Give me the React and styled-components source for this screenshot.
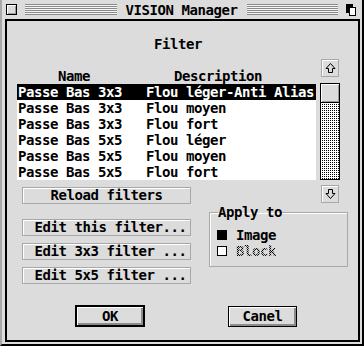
import React from "react";
import styled, { createGlobalStyle } from "styled-components";

const Global = createGlobalStyle`
  html, body { margin: 0; padding: 0; background: #dcdcdc; }
  body {
    font-family: "DejaVu Sans Mono", "Liberation Mono", monospace;
    font-weight: bold;
    font-size: 14px;
    letter-spacing: -0.43px;
    line-height: 16px;
    color: #000;
  }
`;

const Window = styled.div`
  width: 364px;
  height: 346px;
  box-sizing: border-box;
  background: #dcdcdc;
  border-left: 2px solid #a8a8a8;
  border-right: 2px solid #000;
  border-bottom: 2px solid #000;
  padding: 0 2px 2px 3px;
  display: flex;
  flex-direction: column;
`;

const TitleBar = styled.div`
  height: 19px;
  display: flex;
  align-items: center;
  gap: 8px;
  padding: 0 4px 0 1px;
  flex-shrink: 0;
`;

const CloseBox = styled.div`
  width: 11px;
  height: 11px;
  box-sizing: border-box;
  border: 1px solid #000;
  background: #dcdcdc;
  box-shadow: inset 1px 1px #fff, inset -1px -1px #9a9a9a;
`;

const Stripes = styled.div`
  flex: 1;
  height: 11px;
  background: repeating-linear-gradient(
    to bottom,
    #8a8a8a 0 1px,
    #f4f4f4 1px 2px
  );
`;

const TitleText = styled.div`
  margin: 0 1px;
  white-space: pre;
`;

const Work = styled.div`
  flex: 1;
  border: 2px solid #000;
  display: flex;
  flex-direction: column;
`;

const SectionTitle = styled.div`
  margin-top: 15px;
  padding-left: 147px;
  height: 16px;
`;

const ListSection = styled.div`
  margin-top: 7px;
  padding-left: 10px;
  display: flex;
  gap: 4px;
  align-items: flex-start;
`;

const ListColumn = styled.div`
  width: 299px;
  padding-top: 9px;
`;

const Grid = styled.div`
  display: grid;
  grid-template-columns: 129px 1fr;
  height: 16px;
  white-space: pre;
  background: ${(p) => (p.$selected ? "#000" : "transparent")};
  color: ${(p) => (p.$selected ? "#fff" : "#000")};
`;

const HeaderCell = styled.div`
  padding-left: ${(p) => p.$pad}px;
`;

const RowCell = styled.div`
  padding-left: ${(p) => p.$pad || 0}px;
  overflow: hidden;
`;

const ListBody = styled.div`
  background: #fff;
  height: 96px;
`;

const ScrollColumn = styled.div`
  width: 20px;
  display: flex;
  flex-direction: column;
  align-items: center;
  gap: 6px;
`;

const ArrowBox = styled.div`
  width: 18px;
  height: 18px;
  box-sizing: border-box;
  background: #dcdcdc;
  border: 1px solid #a8a8a8;
  box-shadow: inset 1px 1px #fff;
  display: flex;
  align-items: center;
  justify-content: center;
`;

const Track = styled.div`
  width: 20px;
  height: 97px;
  box-sizing: border-box;
  border: 1px solid #000;
  background: conic-gradient(#000 25%, #fff 0) 0 0 / 2px 2px;
`;

const Thumb = styled.div`
  height: 19px;
  box-sizing: border-box;
  background: #dcdcdc;
  border-bottom: 1px solid #000;
  box-shadow: inset 1px 1px #fff, inset -1px -1px #9a9a9a;
`;

const Lower = styled.div`
  display: flex;
  padding-left: 15px;
  gap: 18px;
  align-items: flex-start;
`;

const ButtonColumn = styled.div`
  width: 169px;
  padding-top: 7px;
  display: flex;
  flex-direction: column;
  gap: 7px;
`;

const FlatButton = styled.div`
  height: 17px;
  box-sizing: border-box;
  background: #dcdcdc;
  border: 1px solid #a8a8a8;
  box-shadow: inset 1px 1px #fff;
  line-height: 15px;
  text-align: center;
  white-space: pre;
  padding-left: ${(p) => (p.$indent ? 8 : 0)}px;
  margin-bottom: ${(p) => (p.$spaced ? 8 : 0)}px;
`;

const RightColumn = styled.div`
  width: 139px;
  padding-top: 5px;
  display: flex;
  flex-direction: column;
`;

const DownWrap = styled.div`
  padding-left: 112px;
`;

const Group = styled.fieldset`
  margin: 1px 0 0 0;
  padding: 7px 0 7px 8px;
  border: 1px solid #a8a8a8;
  box-shadow: inset 1px 1px #fff;
  min-width: 0;
`;

const Legend = styled.legend`
  padding: 0;
  height: 16px;
  white-space: pre;
`;

const CheckRow = styled.div`
  display: flex;
  align-items: center;
  gap: 9px;
  height: 16px;
  margin-left: -1px;
`;

const Check = styled.div`
  width: 10px;
  height: 10px;
  box-sizing: border-box;
  border: 1px solid #000;
  background: ${(p) => (p.$on ? "#000" : "#fff")};
`;

const CheckLabel = styled.span`
  ${(p) =>
    p.$disabled
      ? `
    color: transparent;
    background: repeating-conic-gradient(#000 0 25%, #c8c8c8 0 50%) 0 0 / 2px 2px;
    -webkit-background-clip: text;
    background-clip: text;
  `
      : ""}
`;

const BottomRow = styled.div`
  margin-top: 21px;
  padding-left: 68px;
  display: flex;
  align-items: center;
  gap: 83px;
`;

const DialogButton = styled.div`
  width: ${(p) => p.$w}px;
  height: ${(p) => p.$h}px;
  box-sizing: border-box;
  border: ${(p) => (p.$default ? 2 : 1)}px solid #000;
  background: #dcdcdc;
  box-shadow: inset 1px 1px #fff, inset -2px -2px #8c8c8c;
  display: flex;
  align-items: center;
  justify-content: center;
`;

const UpArrow = () => (
  <svg width="11" height="12" viewBox="0 0 11 12">
    <path
      d="M5.5 1.5 L10 6.5 L7.5 6.5 L7.5 10.5 L3.5 10.5 L3.5 6.5 L1 6.5 Z"
      fill="none"
      stroke="#000"
      strokeWidth="1"
    />
  </svg>
);

const DownArrow = () => (
  <svg width="11" height="12" viewBox="0 0 11 12">
    <path
      d="M5.5 10.5 L10 5.5 L7.5 5.5 L7.5 1.5 L3.5 1.5 L3.5 5.5 L1 5.5 Z"
      fill="none"
      stroke="#000"
      strokeWidth="1"
    />
  </svg>
);

const FullBox = () => (
  <svg width="10" height="12" viewBox="0 0 10 12">
    <rect x="0" y="0" width="7" height="9" fill="#000" />
    <rect x="3.5" y="3.5" width="6" height="8" fill="#fff" stroke="#000" />
  </svg>
);

const rows = [
  ["Passe Bas 3x3", "Flou léger-Anti Alias"],
  ["Passe Bas 3x3", "Flou moyen"],
  ["Passe Bas 3x3", "Flou fort"],
  ["Passe Bas 5x5", "Flou léger"],
  ["Passe Bas 5x5", "Flou moyen"],
  ["Passe Bas 5x5", "Flou fort"],
];

export default function App() {
  return (
    <>
      <Global />
      <Window>
        <TitleBar>
          <CloseBox />
          <Stripes />
          <TitleText>VISION Manager</TitleText>
          <Stripes />
          <FullBox />
        </TitleBar>
        <Work>
          <SectionTitle>Filter</SectionTitle>
          <ListSection>
            <ListColumn>
              <Grid>
                <HeaderCell $pad={41}>Name</HeaderCell>
                <HeaderCell $pad={28}>Description</HeaderCell>
              </Grid>
              <ListBody>
                {rows.map((r, i) => (
                  <Grid key={i} $selected={i === 0}>
                    <RowCell $pad={1}>{r[0]}</RowCell>
                    <RowCell>{r[1]}</RowCell>
                  </Grid>
                ))}
              </ListBody>
            </ListColumn>
            <ScrollColumn>
              <ArrowBox>
                <UpArrow />
              </ArrowBox>
              <Track>
                <Thumb />
              </Track>
            </ScrollColumn>
          </ListSection>
          <Lower>
            <ButtonColumn>
              <FlatButton $spaced>Reload filters</FlatButton>
              <FlatButton $indent>Edit this filter...</FlatButton>
              <FlatButton $indent>Edit 3x3 filter ...</FlatButton>
              <FlatButton $indent>Edit 5x5 filter ...</FlatButton>
            </ButtonColumn>
            <RightColumn>
              <DownWrap>
                <ArrowBox>
                  <DownArrow />
                </ArrowBox>
              </DownWrap>
              <Group>
                <Legend>Apply to</Legend>
                <CheckRow>
                  <Check $on />
                  <CheckLabel>Image</CheckLabel>
                </CheckRow>
                <CheckRow>
                  <Check />
                  <CheckLabel $disabled>Block</CheckLabel>
                </CheckRow>
              </Group>
            </RightColumn>
          </Lower>
          <BottomRow>
            <DialogButton $w={70} $h={22} $default>
              OK
            </DialogButton>
            <DialogButton $w={69} $h={21}>
              Canel
            </DialogButton>
          </BottomRow>
        </Work>
      </Window>
    </>
  );
}
